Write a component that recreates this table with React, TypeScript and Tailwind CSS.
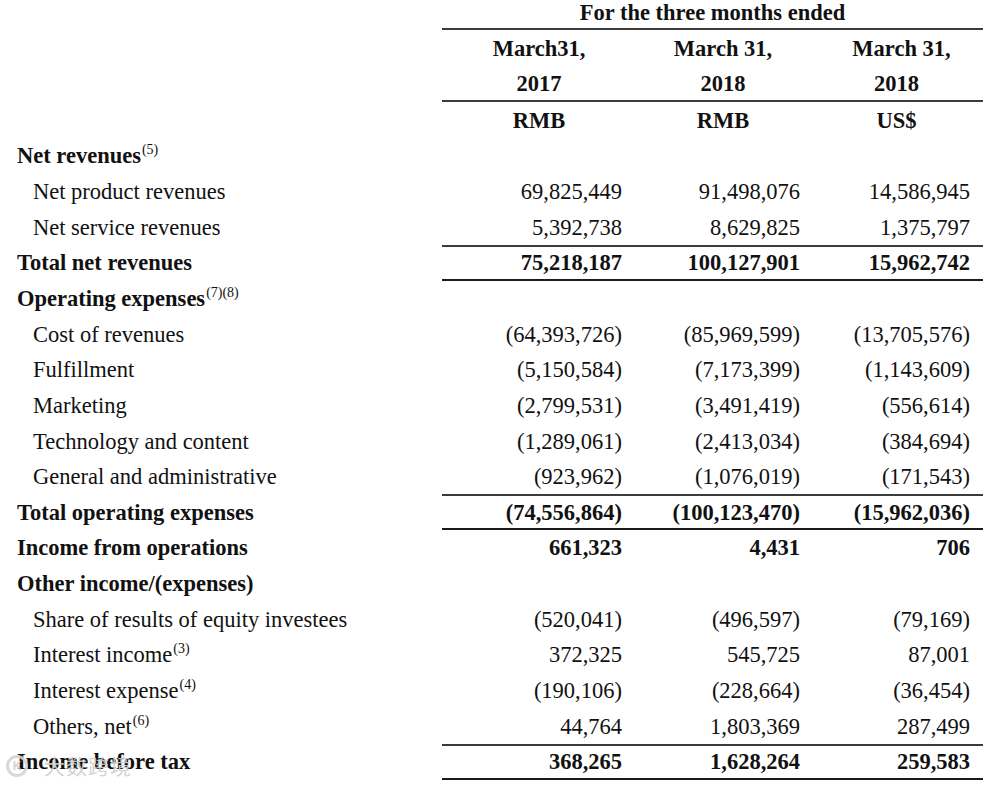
import React from "react";

type Row = {
  label: string;
  sup?: string;
  bold?: boolean;
  indent?: boolean;
  vals?: [string, string, string];
  lines?: boolean;
};

const rows: Row[] = [
  { label: "Net revenues", sup: "(5)", bold: true },
  { label: "Net product revenues", indent: true, vals: ["69,825,449", "91,498,076", "14,586,945"] },
  { label: "Net service revenues", indent: true, vals: ["5,392,738", "8,629,825", "1,375,797"] },
  { label: "Total net revenues", bold: true, lines: true, vals: ["75,218,187", "100,127,901", "15,962,742"] },
  { label: "Operating expenses", sup: "(7)(8)", bold: true },
  { label: "Cost of revenues", indent: true, vals: ["(64,393,726)", "(85,969,599)", "(13,705,576)"] },
  { label: "Fulfillment", indent: true, vals: ["(5,150,584)", "(7,173,399)", "(1,143,609)"] },
  { label: "Marketing", indent: true, vals: ["(2,799,531)", "(3,491,419)", "(556,614)"] },
  { label: "Technology and content", indent: true, vals: ["(1,289,061)", "(2,413,034)", "(384,694)"] },
  { label: "General and administrative", indent: true, vals: ["(923,962)", "(1,076,019)", "(171,543)"] },
  { label: "Total operating expenses", bold: true, lines: true, vals: ["(74,556,864)", "(100,123,470)", "(15,962,036)"] },
  { label: "Income from operations", bold: true, vals: ["661,323", "4,431", "706"] },
  { label: "Other income/(expenses)", bold: true },
  { label: "Share of results of equity investees", indent: true, vals: ["(520,041)", "(496,597)", "(79,169)"] },
  { label: "Interest income", sup: "(3)", indent: true, vals: ["372,325", "545,725", "87,001"] },
  { label: "Interest expense", sup: "(4)", indent: true, vals: ["(190,106)", "(228,664)", "(36,454)"] },
  { label: "Others, net", sup: "(6)", indent: true, vals: ["44,764", "1,803,369", "287,499"] },
  { label: "Income before tax", bold: true, lines: true, vals: ["368,265", "1,628,264", "259,583"] },
];

function DataRow({ r }: { r: Row }) {
  return (
    <div className="flex h-[35.65px]">
      <div
        className={
          "w-[442px] flex items-center pt-[1px] " +
          (r.indent ? "pl-[33px] " : "pl-[17px] ") +
          (r.bold ? "font-bold" : "font-normal")
        }
      >
        <span>
          {r.label}
          {r.sup && (
            <sup className="text-[14px] font-normal top-[-0.65em] ml-[1px]">{r.sup}</sup>
          )}
        </span>
      </div>
      <div
        className={
          "w-[541px] flex box-border " +
          (r.lines ? "border-t-2 border-b-2 border-t-[#3c3c3c] border-b-[#1a1a1a]" : "")
        }
      >
        {r.vals && (
          <>
            <div className={"w-[194px] flex items-center justify-end pt-[1px] pr-[14px] " + (r.bold ? "font-bold" : "")}>
              {r.vals[0]}
            </div>
            <div className={"w-[174px] flex items-center justify-end pt-[1px] pr-[10px] " + (r.bold ? "font-bold" : "")}>
              {r.vals[1]}
            </div>
            <div className={"w-[173px] flex items-center justify-end pt-[1px] pr-[13px] " + (r.bold ? "font-bold" : "")}>
              {r.vals[2]}
            </div>
          </>
        )}
      </div>
    </div>
  );
}

export default function App() {
  return (
    <div className="relative w-[1000px] h-[787px] overflow-hidden bg-white text-[#111] text-[22.5px] font-['Liberation_Serif','Times_New_Roman',serif]">
      {/* Header */}
      <div className="flex">
        <div className="w-[442px]" />
        <div className="w-[541px] font-bold">
          <div className="h-[30px] box-border border-b-2 border-[#3c3c3c] text-center leading-[25px]">
            For the three months ended
          </div>
          <div className="flex h-[36px] items-center pt-[2px]">
            <div className="w-[194px] text-center">March31,</div>
            <div className="w-[174px] text-center">March 31,</div>
            <div className="w-[173px] text-center pl-[10px]">March 31,</div>
          </div>
          <div className="flex h-[36px] items-center box-border border-b-2 border-[#3c3c3c] pt-[2px]">
            <div className="w-[194px] text-center">2017</div>
            <div className="w-[174px] text-center">2018</div>
            <div className="w-[173px] text-center">2018</div>
          </div>
          <div className="flex h-[36px] items-center pt-[2px]">
            <div className="w-[194px] text-center">RMB</div>
            <div className="w-[174px] text-center">RMB</div>
            <div className="w-[173px] text-center">US$</div>
          </div>
        </div>
      </div>
      {/* Body */}
      <div className="flex flex-col">
        {rows.map((r, i) => (
          <DataRow key={i} r={r} />
        ))}
      </div>
      {/* Watermark */}
      <div className="absolute left-[6px] top-[750px] flex items-center gap-[16px] text-[#cfcfcf] opacity-90 pointer-events-none">
        <div className="w-[22px] h-[22px] rounded-full border-[3px] border-[#d4d4d4] flex items-center justify-center text-[12px] font-bold font-['Liberation_Sans',sans-serif]">
          K
        </div>
        <span className="text-[21px] font-['Noto_Sans_CJK_SC',sans-serif] tracking-[1px]">大数跨境</span>
      </div>
    </div>
  );
}
